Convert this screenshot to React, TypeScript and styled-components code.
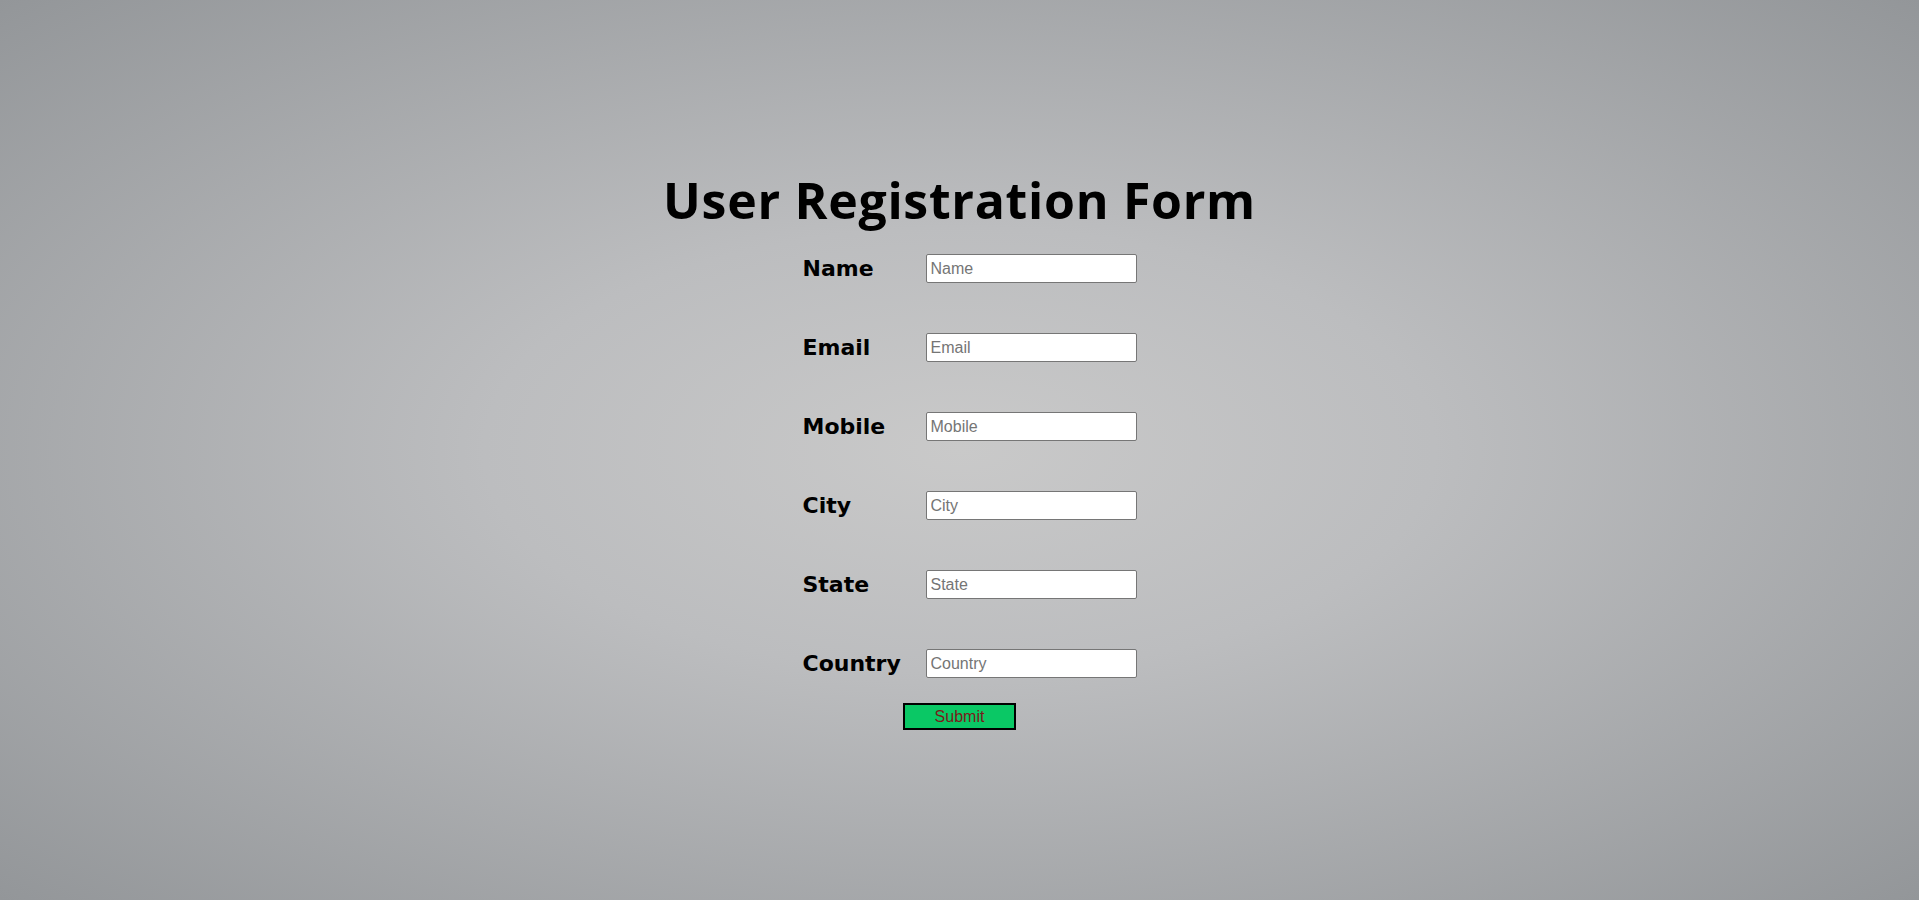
import React from "react";
import styled, { createGlobalStyle } from "styled-components";

const GlobalStyle = createGlobalStyle`
  html, body {
    margin: 0;
    padding: 0;
  }
  body {
    min-height: 100vh;
    background: radial-gradient(ellipse at center, #c9c9c9 0%, #bcbdbf 35%, #939699 100%);
    background-attachment: fixed;
  }
`;

const Page = styled.main`
  min-height: 100vh;
  display: flex;
  flex-direction: column;
  align-items: center;
  padding-top: 168px;
  box-sizing: border-box;
`;

const Title = styled.h1`
  margin: 0 0 22px 0;
  font-family: "Open Sans", "DejaVu Sans", sans-serif;
  font-weight: 700;
  font-size: 50px;
  line-height: 64px;
  letter-spacing: 0.7px;
  color: #000;
`;

const FormGrid = styled.form`
  display: flex;
  flex-direction: column;
  align-items: center;
`;

const Fields = styled.div`
  display: grid;
  grid-template-columns: 123px 211px;
  row-gap: 50px;
  align-items: center;
  margin-left: 20px;
`;

const Label = styled.label`
  font-family: "DejaVu Sans", "Liberation Sans", sans-serif;
  font-weight: bold;
  font-size: 22px;
  color: #000;
`;

const Input = styled.input`
  box-sizing: border-box;
  width: 211px;
  height: 29px;
  padding: 0 4px;
  border: 1px solid #767676;
  border-radius: 2px;
  background: #fff;
  font-family: "Liberation Sans", Arial, sans-serif;
  font-size: 16px;
  color: #000;
  &::placeholder {
    color: #757575;
  }
`;

const SubmitButton = styled.button`
  box-sizing: border-box;
  margin-top: 25px;
  width: 113px;
  height: 27px;
  border: 2px solid #000;
  background: #0ac865;
  color: #7a1a1a;
  font-family: "Liberation Sans", Arial, sans-serif;
  font-size: 16px;
  padding: 0;
  cursor: pointer;
`;

const fields = ["Name", "Email", "Mobile", "City", "State", "Country"];

export default function App() {
  return (
    <>
      <GlobalStyle />
      <Page>
        <Title>User Registration Form</Title>
        <FormGrid onSubmit={(e) => e.preventDefault()}>
          <Fields>
            {fields.map((f) => (
              <React.Fragment key={f}>
                <Label htmlFor={f.toLowerCase()}>{f}</Label>
                <Input id={f.toLowerCase()} type="text" placeholder={f} />
              </React.Fragment>
            ))}
          </Fields>
          <SubmitButton type="submit">Submit</SubmitButton>
        </FormGrid>
      </Page>
    </>
  );
}
